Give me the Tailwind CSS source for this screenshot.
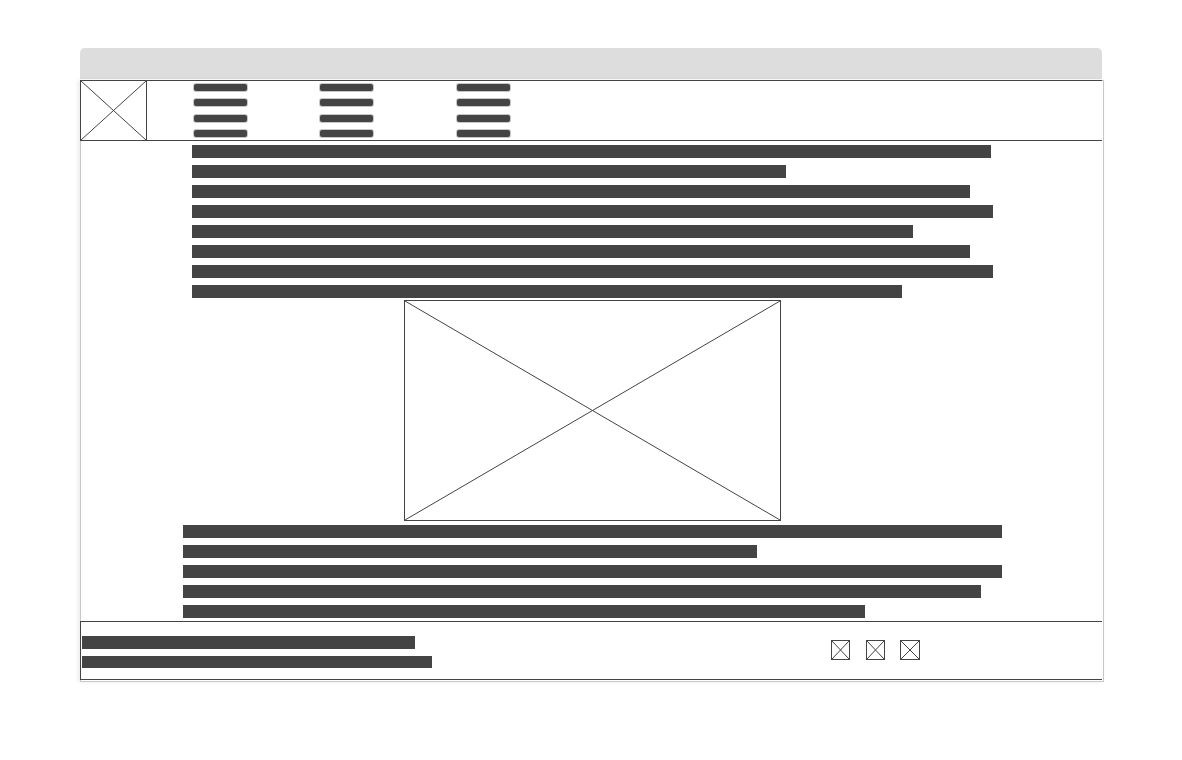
<!DOCTYPE html>
<html lang="en">
<head>
<meta charset="utf-8">
<meta name="viewport" content="width=device-width, initial-scale=1">
<title>Page wireframe</title>
<script src="https://cdn.jsdelivr.net/npm/@tailwindcss/browser@4"></script>
</head>
<body class="bg-white pt-12 pr-[78px] pb-12 pl-20 font-['Liberation_Sans',sans-serif]">
  <div class="mr-0.5 mb-px h-[31px] rounded-t-[5px] bg-[#dddddd]"></div>
  <div class="border border-[#c8c8c8] bg-white shadow-[-2px_0_4px_rgba(0,0,0,0.08)]">
    <header class="-mt-px mr-px -ml-px flex h-[61px] border-y border-l border-[#444444]">
      <a href="#" aria-label="Home" class="block w-[66px] shrink-0 border-r border-[#444444]">
        <svg class="block size-full" viewBox="0 0 65 59" preserveAspectRatio="none" fill="none" stroke="#444444" stroke-width="1"><path d="M0 0L65 59M65 0L0 59"/></svg>
      </a>
      <nav aria-label="Main" class="ml-[47px] flex pt-[3px]">
        <div class="mr-[73px] flex h-[53px] w-[53px] flex-col justify-between">
          <a href="#" aria-label="Link" class="h-[7px] rounded-[2px] bg-[#444444] ring-1 ring-[#444444]/30"></a>
          <a href="#" aria-label="Link" class="h-[7px] rounded-[2px] bg-[#444444] ring-1 ring-[#444444]/30"></a>
          <a href="#" aria-label="Link" class="h-[7px] rounded-[2px] bg-[#444444] ring-1 ring-[#444444]/30"></a>
          <a href="#" aria-label="Link" class="h-[7px] rounded-[2px] bg-[#444444] ring-1 ring-[#444444]/30"></a>
        </div>
        <div class="mr-[84px] flex h-[53px] w-[53px] flex-col justify-between">
          <a href="#" aria-label="Link" class="h-[7px] rounded-[2px] bg-[#444444] ring-1 ring-[#444444]/30"></a>
          <a href="#" aria-label="Link" class="h-[7px] rounded-[2px] bg-[#444444] ring-1 ring-[#444444]/30"></a>
          <a href="#" aria-label="Link" class="h-[7px] rounded-[2px] bg-[#444444] ring-1 ring-[#444444]/30"></a>
          <a href="#" aria-label="Link" class="h-[7px] rounded-[2px] bg-[#444444] ring-1 ring-[#444444]/30"></a>
        </div>
        <div class="flex h-[53px] w-[53px] flex-col justify-between">
          <a href="#" aria-label="Link" class="h-[7px] rounded-[2px] bg-[#444444] ring-1 ring-[#444444]/30"></a>
          <a href="#" aria-label="Link" class="h-[7px] rounded-[2px] bg-[#444444] ring-1 ring-[#444444]/30"></a>
          <a href="#" aria-label="Link" class="h-[7px] rounded-[2px] bg-[#444444] ring-1 ring-[#444444]/30"></a>
          <a href="#" aria-label="Link" class="h-[7px] rounded-[2px] bg-[#444444] ring-1 ring-[#444444]/30"></a>
        </div>
      </nav>
    </header>
    <main class="flex flex-col items-center pt-1 pb-[3px] pl-px">
      <div class="flex w-[801px] max-w-full flex-col gap-[7px]">
        <div class="h-[13px] w-[799px] max-w-full bg-[#444444]"></div>
        <div class="h-[13px] w-[594px] max-w-full bg-[#444444]"></div>
        <div class="h-[13px] w-[778px] max-w-full bg-[#444444]"></div>
        <div class="h-[13px] w-full bg-[#444444]"></div>
        <div class="h-[13px] w-[721px] max-w-full bg-[#444444]"></div>
        <div class="h-[13px] w-[778px] max-w-full bg-[#444444]"></div>
        <div class="h-[13px] w-full bg-[#444444]"></div>
        <div class="h-[13px] w-[710px] max-w-full bg-[#444444]"></div>
      </div>
      <div class="mt-0.5 h-[221px] w-[377px] max-w-full border border-[#444444]">
        <svg class="block size-full" viewBox="0 0 375 219" preserveAspectRatio="none" fill="none" stroke="#444444" stroke-width="1"><path d="M0 0L375 219M375 0L0 219"/></svg>
      </div>
      <div class="mt-1 flex w-[819px] max-w-full flex-col gap-[7px]">
        <div class="h-[13px] w-full bg-[#444444]"></div>
        <div class="h-[13px] w-[574px] max-w-full bg-[#444444]"></div>
        <div class="h-[13px] w-full bg-[#444444]"></div>
        <div class="h-[13px] w-[798px] max-w-full bg-[#444444]"></div>
        <div class="h-[13px] w-[682px] max-w-full bg-[#444444]"></div>
      </div>
    </main>
    <footer class="mr-px mb-px -ml-px flex justify-between border-y border-l border-[#444444] pt-3.5 pr-[182px] pb-[11px] pl-px">
      <div class="flex flex-col gap-[7px]">
        <div class="h-[13px] w-[333px] bg-[#444444]"></div>
        <div class="h-3 w-[350px] bg-[#444444]"></div>
      </div>
      <nav aria-label="Social" class="mt-1 flex">
        <a href="#" aria-label="Social link" class="mr-4 block h-5 w-[19px] border border-[#444444]">
          <svg class="block size-full" viewBox="0 0 17 18" preserveAspectRatio="none" fill="none" stroke="#444444" stroke-width="1"><path d="M0 0L17 18M17 0L0 18"/></svg>
        </a>
        <a href="#" aria-label="Social link" class="mr-[15px] block h-5 w-[19px] border border-[#444444]">
          <svg class="block size-full" viewBox="0 0 17 18" preserveAspectRatio="none" fill="none" stroke="#444444" stroke-width="1"><path d="M0 0L17 18M17 0L0 18"/></svg>
        </a>
        <a href="#" aria-label="Social link" class="block size-5 border border-[#444444]">
          <svg class="block size-full" viewBox="0 0 18 18" fill="none" stroke="#444444" stroke-width="1"><path d="M0 0L18 18M18 0L0 18"/></svg>
        </a>
      </nav>
    </footer>
  </div>
</body>
</html>
